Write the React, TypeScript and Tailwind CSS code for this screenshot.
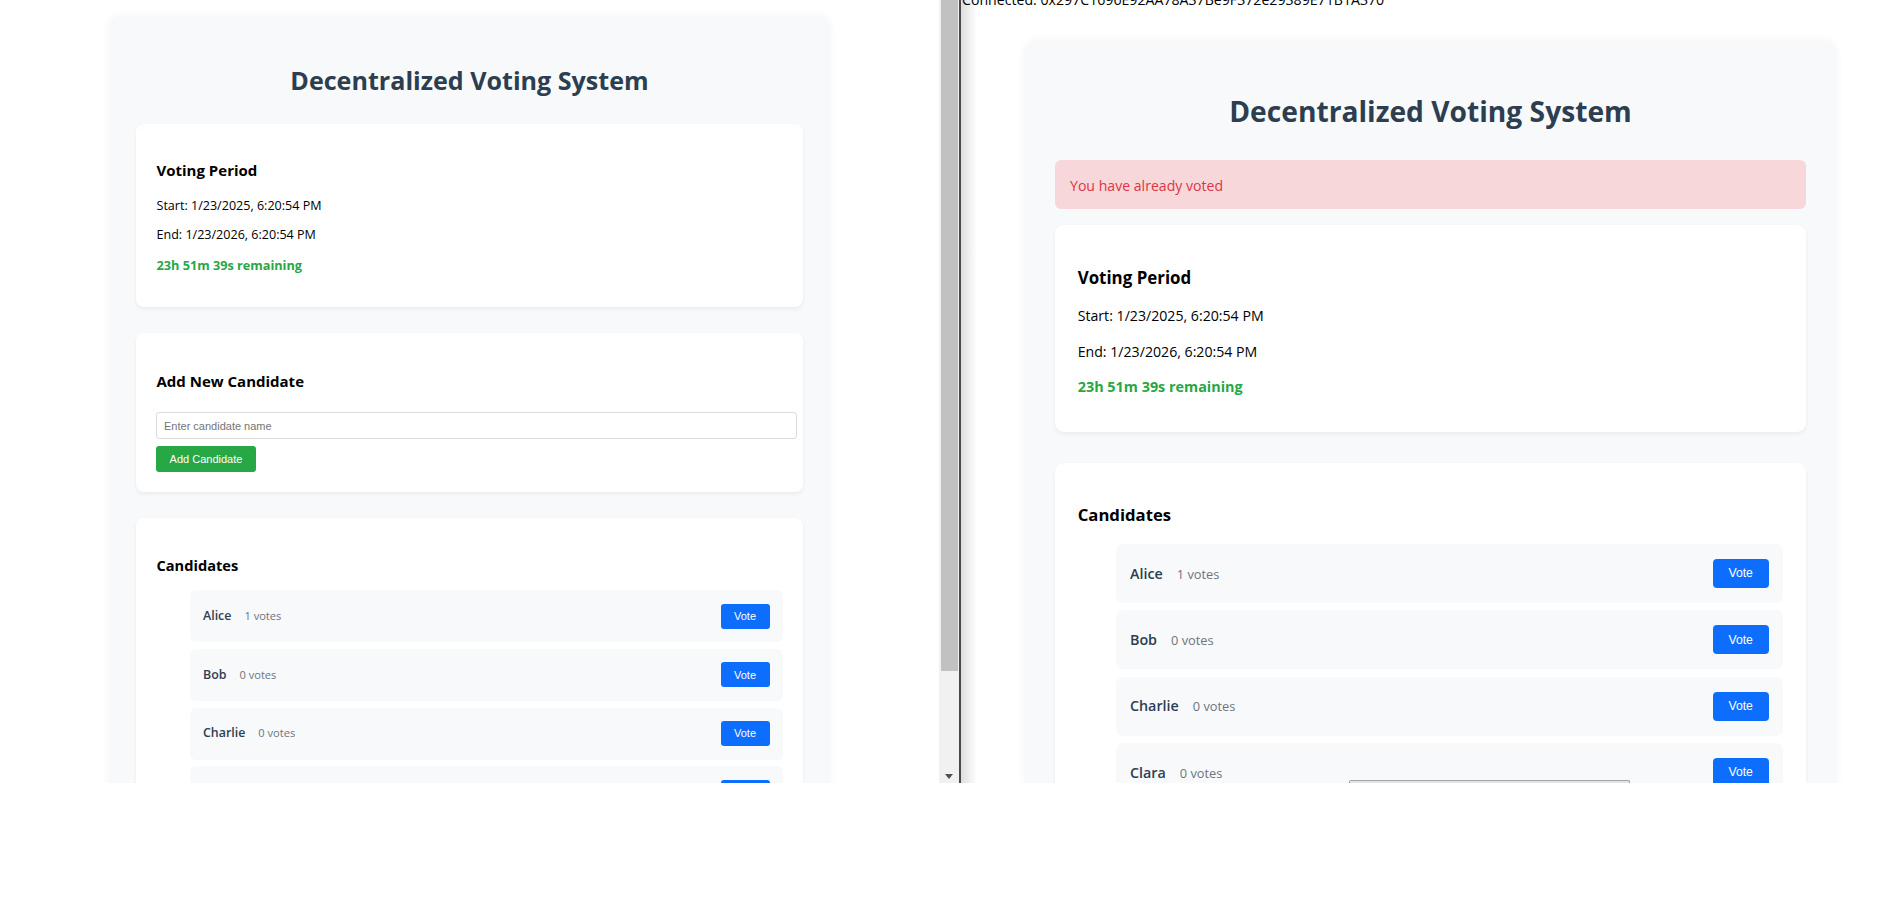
const sans = "font-['Open_Sans','Noto_Sans',sans-serif]";
const arial = "font-['Liberation_Sans',Arial,sans-serif]";

const candidates = [
  { name: "Alice", votes: 1 },
  { name: "Bob", votes: 0 },
  { name: "Charlie", votes: 0 },
  { name: "Clara", votes: 0 },
];

function LeftPane() {
  return (
    <div className={`w-[939px] h-[783px] shrink-0 overflow-hidden bg-white ${sans}`}>
      <div className="mx-auto mt-[16px] w-[721px] rounded-[12px] bg-[#f8f9fa] px-[27px] pt-[48px] pb-[30px] shadow-[0_0_10px_rgba(0,0,0,0.05)]">
        <h1 className="h-[32px] text-center text-[25.1px] leading-[32px] font-bold text-[#2c3e50]">
          Decentralized Voting System
        </h1>

        {/* voting period */}
        <section className="mt-[28px] rounded-[8px] bg-white px-[20.5px] pt-[36px] pb-[33px] shadow-[0_2px_4px_rgba(0,0,0,0.06)]">
          <h3 className="h-[20px] text-[15px] leading-[20px] font-bold text-black">Voting Period</h3>
          <p className="mt-[16.7px] h-[18px] text-[12.56px] leading-[18px] text-black">Start: 1/23/2025, 6:20:54 PM</p>
          <p className="mt-[11.3px] h-[18px] text-[12.56px] leading-[18px] text-black">End: 1/23/2026, 6:20:54 PM</p>
          <p className="mt-[11.9px] h-[18px] text-[12.7px] leading-[18px] font-bold text-[#28a745]">23h 51m 39s remaining</p>
        </section>

        {/* add candidate */}
        <section className="mt-[26.4px] rounded-[8px] bg-white px-[20.5px] pt-[38px] pb-[20px] shadow-[0_2px_4px_rgba(0,0,0,0.06)]">
          <h3 className="h-[20px] text-[15px] leading-[20px] font-bold text-black">Add New Candidate</h3>
          <input
            placeholder="Enter candidate name"
            className={`mt-[21px] block h-[27px] w-[641px] -ml-[0.5px] rounded-[3px] border border-[#dcdcdc] bg-white px-[7px] text-[11px] outline-none placeholder:text-[#757575] ${arial}`}
          />
          <button
            className={`mt-[7px] block h-[26px] w-[100px] -ml-[0.5px] rounded-[3px] bg-[#28a745] text-[11px] font-medium text-white ${arial}`}
          >
            Add Candidate
          </button>
        </section>

        {/* candidates */}
        <section className="mt-[26px] rounded-[8px] bg-white px-[20.5px] pt-[36.8px] pb-[20px] shadow-[0_2px_4px_rgba(0,0,0,0.06)]">
          <h3 className="h-[20px] text-[14.6px] leading-[20px] font-bold text-black">Candidates</h3>
          <ul className="mt-[15.2px] ml-[33.5px] flex flex-col gap-[6.7px]">
            {candidates.map((c) => (
              <li
                key={c.name}
                className="flex h-[52px] items-center justify-between rounded-[6px] bg-[#f8f9fa] pl-[13px] pr-[13px]"
              >
                <div className="flex items-baseline">
                  <span className="text-[12.4px] font-semibold text-[#2c3e50]">{c.name}</span>
                  <span className="ml-[13px] text-[11.1px] text-[#6c757d]">{c.votes} votes</span>
                </div>
                <button className={`h-[25px] w-[49px] rounded-[3px] bg-[#0d6efd] text-[11px] font-medium text-white ${arial}`}>
                  Vote
                </button>
              </li>
            ))}
          </ul>
        </section>
      </div>
    </div>
  );
}

function Scrollbar() {
  return (
    <>
      <div className="relative h-[783px] w-[20px] shrink-0 bg-[#f1f1f1]">
        <div className="ml-[2px] h-[671px] w-[17px] bg-[#c1c1c1]" />
        <svg className="absolute left-[6px] bottom-[4px]" width="8" height="5" viewBox="0 0 8 5">
          <path d="M0 0h8L4 5z" fill="#505050" />
        </svg>
      </div>
      <div className="h-[783px] w-[2px] shrink-0 bg-[#4a4a4a]" />
    </>
  );
}

function RightPane() {
  return (
    <div className={`relative h-[783px] w-[923px] shrink-0 overflow-hidden bg-white ${sans}`}>
      <div className="absolute left-0 top-0 h-full w-[16px] bg-linear-to-r from-[#dedede] to-white/0" />
      <div className="relative -mt-[10.5px] w-[939px]">
        <div className="h-[20px] pl-[1px] text-[14.15px] leading-[20px] text-black">
          Connected: 0x297C1696E92AA78A37Be9F372e29389E71B1A370
        </div>

        <div className="mx-auto mt-[30.5px] w-[811px] rounded-[13.5px] bg-[#f8f9fa] px-[30px] pt-[53px] pb-[34px] shadow-[0_0_10px_rgba(0,0,0,0.05)]">
          <h1 className="h-[36px] text-center text-[28.2px] leading-[36px] font-bold text-[#2c3e50]">
            Decentralized Voting System
          </h1>

          <div className="mt-[31px] h-[49px] rounded-[6px] bg-[#f8d7da] pl-[15px] pt-[16.2px] text-[14.1px] leading-[20px] text-[#dc3545]">
            You have already voted
          </div>

          {/* voting period */}
          <section className="mt-[16px] rounded-[9px] bg-white px-[22.7px] pt-[41.6px] pb-[35.4px] shadow-[0_2px_4px_rgba(0,0,0,0.06)]">
            <h3 className="h-[22px] text-[16.9px] leading-[22px] font-bold text-black">Voting Period</h3>
            <p className="mt-[17.6px] h-[20px] text-[14.15px] leading-[20px] text-black">Start: 1/23/2025, 6:20:54 PM</p>
            <p className="mt-[15.6px] h-[20px] text-[14.15px] leading-[20px] text-black">End: 1/23/2026, 6:20:54 PM</p>
            <p className="mt-[14.8px] h-[20px] text-[14.4px] leading-[20px] font-bold text-[#28a745]">23h 51m 39s remaining</p>
          </section>

          {/* candidates */}
          <section className="mt-[31px] rounded-[9px] bg-white px-[22.7px] pt-[41.4px] pb-[22px] shadow-[0_2px_4px_rgba(0,0,0,0.06)]">
            <h3 className="h-[22px] text-[16.7px] leading-[22px] font-bold text-black">Candidates</h3>
            <ul className="mt-[17.6px] ml-[37.9px] flex flex-col gap-[7.3px]">
              {candidates.map((c) => (
                <li
                  key={c.name}
                  className="flex h-[59px] items-center justify-between rounded-[7px] bg-[#f8f9fa] pl-[14.4px] pr-[14.7px]"
                >
                  <div className="flex items-baseline">
                    <span className="text-[14.3px] font-semibold text-[#2c3e50]">{c.name}</span>
                    <span className="ml-[14px] text-[12.8px] text-[#6c757d]">{c.votes} votes</span>
                  </div>
                  <button className={`h-[29px] w-[56px] rounded-[4px] bg-[#0d6efd] text-[12.2px] font-medium text-white ${arial}`}>
                    Vote
                  </button>
                </li>
              ))}
            </ul>
          </section>
        </div>
      </div>

      {/* toast edge peeking at the bottom */}
      <div className="absolute left-[388px] top-[780px] h-[8px] w-[281px] rounded-t-[2px] border-t border-x border-[#a3a3a3] bg-[#e4e4e4]" />
    </div>
  );
}

export default function App() {
  return (
    <div className="flex h-[905px] w-[1884px] items-start overflow-hidden bg-white">
      <LeftPane />
      <Scrollbar />
      <RightPane />
    </div>
  );
}
